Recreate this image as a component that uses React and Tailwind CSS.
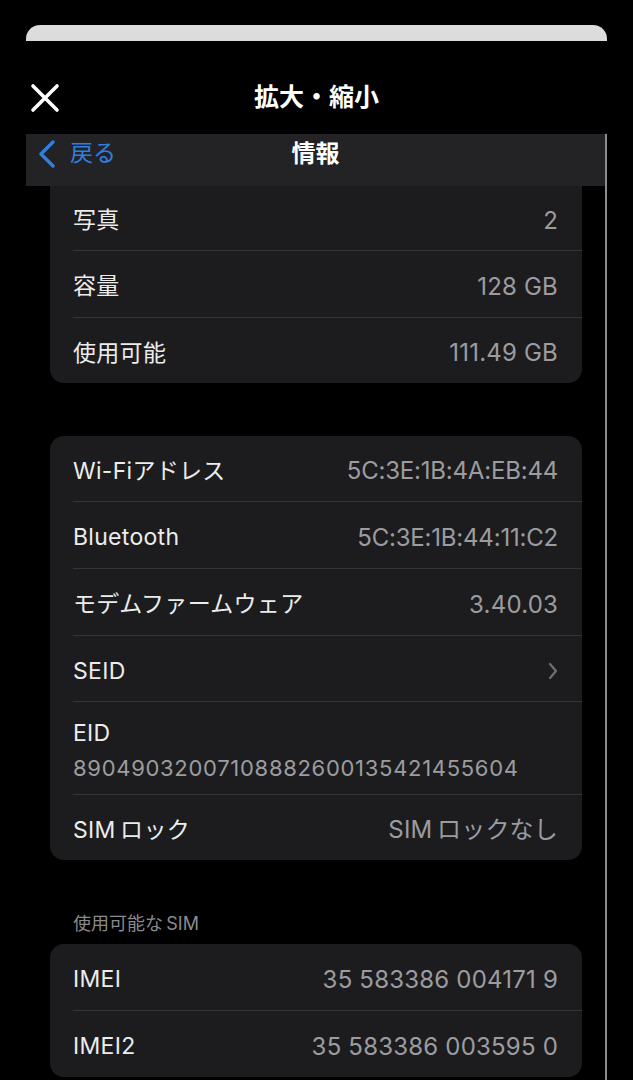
import React from 'react';

const font = "font-['Inter','Noto_Sans_CJK_JP',sans-serif]";

const CloseIcon = () => (
  <svg width="30" height="30" viewBox="0 0 30 30" fill="none">
    <path d="M3 3 L27 27 M27 3 L3 27" stroke="white" strokeWidth="3.6" strokeLinecap="round" />
  </svg>
);

const BackChevron = () => (
  <svg width="18" height="28" viewBox="0 0 18 28" fill="none">
    <path d="M15 2 L3 14 L15 26" stroke="#2f7fe0" strokeWidth="3.4" strokeLinecap="round" strokeLinejoin="round" />
  </svg>
);

const RowChevron = () => (
  <svg width="10" height="18" viewBox="0 0 10 18" fill="none">
    <path d="M2 2 L8 9 L2 16" stroke="#6f6f73" strokeWidth="2.2" strokeLinecap="round" strokeLinejoin="round" />
  </svg>
);

// 1 行分
const Row = ({ label, value, h, last, chevron, tight }) => (
  <div className={`ml-[23px] pr-[24px] pt-[5px] flex items-center justify-between ${last ? '' : 'border-b border-[#343436]'}`} style={{ height: h }}>
    <span className="text-[23px] tracking-[0.3px] text-[#ececec] leading-none">{label}</span>
    {chevron ? (
      <RowChevron />
    ) : (
      <span className={`text-[24px] text-[#9c9ca0] leading-none ${tight ? 'tracking-[-0.2px]' : 'tracking-[0.2px]'}`}>{value}</span>
    )}
  </div>
);

const Card = ({ children, className = '' }) => (
  <div className={`bg-[#1c1c1e] rounded-[14px] ${className}`}>{children}</div>
);

export default function App() {
  return (
    <div className={`w-[633px] h-[1080px] bg-black overflow-hidden ${font}`}>
      <div className="pt-[25px] px-[26px]">
        <div className="h-4 rounded-t-[14px] bg-[#dcdcdc]" />
      </div>

      <header className="h-[93px] pt-[21px] px-[30px] grid grid-cols-[30px_1fr_30px] items-center">
        <CloseIcon />
        <h1 className="text-center text-white text-[25px] font-bold">拡大・縮小</h1>
        <span />
      </header>

      <div className="mx-[26px] border-r-2 border-[#8c8c8c] h-[946px]">
        <nav className="h-[52px] pb-[13px] bg-[#232325] grid grid-cols-[120px_1fr_120px] items-center px-[12px]">
          <div className="flex items-center gap-[14px] text-[#2f7fe0] text-[23px]">
            <BackChevron />
            <span>戻る</span>
          </div>
          <div className="text-center text-white text-[24px] font-bold">情報</div>
          <span />
        </nav>

        <div className="pl-[24px] pr-[23px]">
          <Card className="rounded-t-none">
            <Row label="写真" value="2" h={65} />
            <Row label="容量" value="128 GB" h={67} />
            <Row label="使用可能" value="111.49 GB" h={65} last />
          </Card>

          <Card className="mt-[53px]">
            <Row label="Wi-Fiアドレス" value="5C:3E:1B:4A:EB:44" h={66} tight />
            <Row label="Bluetooth" value="5C:3E:1B:44:11:C2" h={67} tight />
            <Row label="モデムファームウェア" value="3.40.03" h={67} />
            <Row label="SEID" chevron h={66} />
            <div className="ml-[23px] pr-[24px] pt-[4px] h-[93px] border-b border-[#343436] flex flex-col justify-center gap-[12px]">
              <span className="text-[23px] tracking-[0.3px] text-[#ececec] leading-none">EID</span>
              <span className="text-[22px] text-[#9c9ca0] leading-none tracking-[0.7px]">89049032007108882600135421455604</span>
            </div>
            <Row label={'SIM\u2009ロック'} value={'SIM\u2009ロックなし'} h={65} last />
          </Card>

          <div className="pl-[23px] pt-[55px] pb-[11px] text-[18px] text-[#8a8a8e] leading-none">{'使用可能な\u2009SIM'}</div>

          <Card>
            <Row label="IMEI" value="35 583386 004171 9" h={67} />
            <Row label="IMEI2" value="35 583386 003595 0" h={66} last />
          </Card>
        </div>
      </div>
    </div>
  );
}
